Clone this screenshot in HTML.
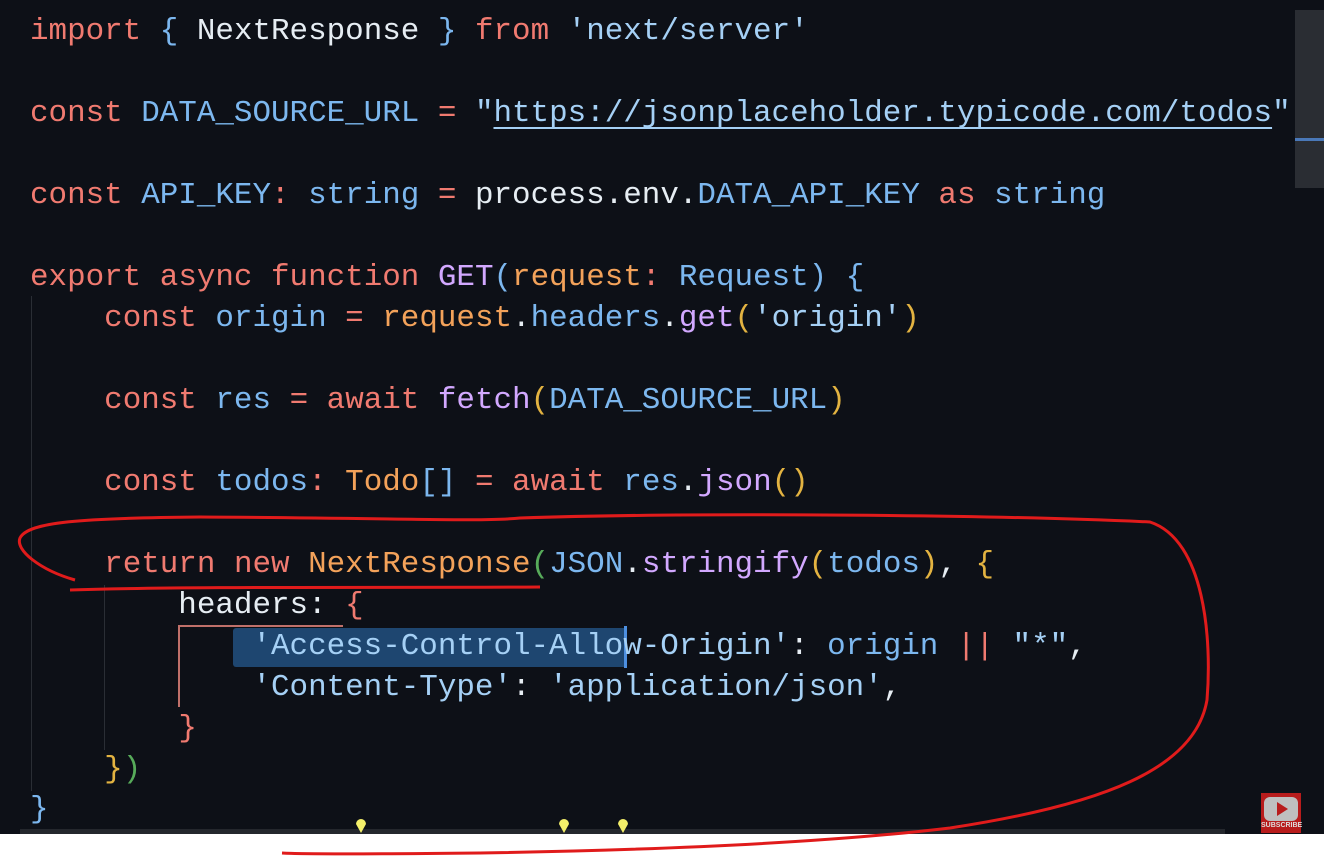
<!DOCTYPE html>
<html><head><meta charset="utf-8"><style>
html,body{margin:0;padding:0;background:#fff;}
#ed{position:absolute;left:0;top:0;width:1324px;height:834px;background:#0d1017;overflow:hidden;}
.l{position:absolute;left:30px;white-space:pre;font-family:"Liberation Mono",monospace;font-size:30.9px;line-height:40px;color:#e6edf3;}
.k{color:#f07a70}.b{color:#7cb7ef}.w{color:#e6edf3}.o{color:#f3a25a}.p{color:#d2a8ff}.s{color:#a5d0f5}.y{color:#e3b341}.g{color:#57ab5a}.u{text-decoration:underline;text-underline-offset:6px;text-decoration-thickness:2px}
</style></head><body>
<div id="ed">
<div style="position:absolute;left:1295px;top:10px;width:29px;height:178px;background:#2a2d33"></div>
<div style="position:absolute;left:1295px;top:138px;width:29px;height:3px;background:#4a78b8"></div>
<div style="position:absolute;left:20px;top:829px;width:1205px;height:5px;background:#24272d"></div>
<div style="position:absolute;left:31px;top:296px;width:1px;height:495px;background:#2a2e35"></div>
<div style="position:absolute;left:104px;top:585px;width:1px;height:165px;background:#2a2e35"></div>
<div style="position:absolute;left:233px;top:628px;width:394px;height:39px;background:#1e4670;border-radius:3px"></div>
<div style="position:absolute;left:624px;top:626px;width:3px;height:42px;background:#4d8fe0"></div>
<div style="position:absolute;left:178px;top:625px;width:165px;height:2px;background:#c0706a"></div>
<div style="position:absolute;left:178px;top:625px;width:2px;height:82px;background:#c0706a"></div>
<div class="l" style="top:12px"><span class="k">import</span> <span class="b">{</span> NextResponse <span class="b">}</span> <span class="k">from</span> <span class="s">'next/server'</span></div>
<div class="l" style="top:94px"><span class="k">const</span> <span class="b">DATA_SOURCE_URL</span> <span class="k">=</span> <span class="s">"<span class="u">https://jsonplaceholder.typicode.com/todos</span>"</span></div>
<div class="l" style="top:176px"><span class="k">const</span> <span class="b">API_KEY</span><span class="k">:</span> <span class="b">string</span> <span class="k">=</span> process.env.<span class="b">DATA_API_KEY</span> <span class="k">as</span> <span class="b">string</span></div>
<div class="l" style="top:258px"><span class="k">export</span> <span class="k">async</span> <span class="k">function</span> <span class="p">GET</span><span class="b">(</span><span class="o">request</span><span class="k">:</span> <span class="b">Request</span><span class="b">)</span> <span class="b">{</span></div>
<div class="l" style="top:299px">    <span class="k">const</span> <span class="b">origin</span> <span class="k">=</span> <span class="o">request</span>.<span class="b">headers</span>.<span class="p">get</span><span class="y">(</span><span class="s">'origin'</span><span class="y">)</span></div>
<div class="l" style="top:381px">    <span class="k">const</span> <span class="b">res</span> <span class="k">=</span> <span class="k">await</span> <span class="p">fetch</span><span class="y">(</span><span class="b">DATA_SOURCE_URL</span><span class="y">)</span></div>
<div class="l" style="top:463px">    <span class="k">const</span> <span class="b">todos</span><span class="k">:</span> <span class="o">Todo</span><span class="b">[]</span> <span class="k">=</span> <span class="k">await</span> <span class="b">res</span>.<span class="p">json</span><span class="y">()</span></div>
<div class="l" style="top:545px">    <span class="k">return</span> <span class="k">new</span> <span class="o">NextResponse</span><span class="g">(</span><span class="b">JSON</span>.<span class="p">stringify</span><span class="y">(</span><span class="b">todos</span><span class="y">)</span>, <span class="y">{</span></div>
<div class="l" style="top:586px">        headers: <span class="k">{</span></div>
<div class="l" style="top:627px">            <span class="s">'Access-Control-Allow-Origin'</span>: <span class="b">origin</span> <span class="k">||</span> <span class="s">"*"</span>,</div>
<div class="l" style="top:668px">            <span class="s">'Content-Type'</span>: <span class="s">'application/json'</span>,</div>
<div class="l" style="top:709px">        <span class="k">}</span></div>
<div class="l" style="top:750px">    <span class="y">}</span><span class="g">)</span></div>
<div class="l" style="top:790px"><span class="b">}</span></div>
<div style="position:absolute;left:1261px;top:793px;width:40px;height:40px;background:#b81c1c"></div>
<div style="position:absolute;left:1264px;top:797px;width:34px;height:24px;background:#bfbfbf;border-radius:6px"></div>
<div style="position:absolute;left:1277px;top:802px;width:0;height:0;border-left:11px solid #b81c1c;border-top:7px solid transparent;border-bottom:7px solid transparent"></div>
<div style="position:absolute;left:1261px;top:822px;width:40px;font:bold 7px 'Liberation Sans',sans-serif;color:#ddd;text-align:center">SUBSCRIBE</div>
</div>
<svg width="1324" height="860" style="position:absolute;left:0;top:0" fill="none">
<path d="M75,580 C40,570 15,550 20,538 C28,522 80,518 200,517 C400,518 480,522 520,518 C700,512 1000,515 1150,522 C1205,540 1212,640 1207,700 C1195,770 1100,805 950,828 C800,846 600,851 480,853 C380,854 300,854 282,853" stroke="#e01b1b" stroke-width="3"/>
<path d="M70,590 C200,586 400,588 540,587" stroke="#e01b1b" stroke-width="3"/>
<g fill="#f4f06a"><path d="M356,824 a5,5 0 1 1 10,0 l-5,9z"/><path d="M559,824 a5,5 0 1 1 10,0 l-5,9z"/><path d="M618,824 a5,5 0 1 1 10,0 l-5,9z"/></g>
</svg>
</body></html>
